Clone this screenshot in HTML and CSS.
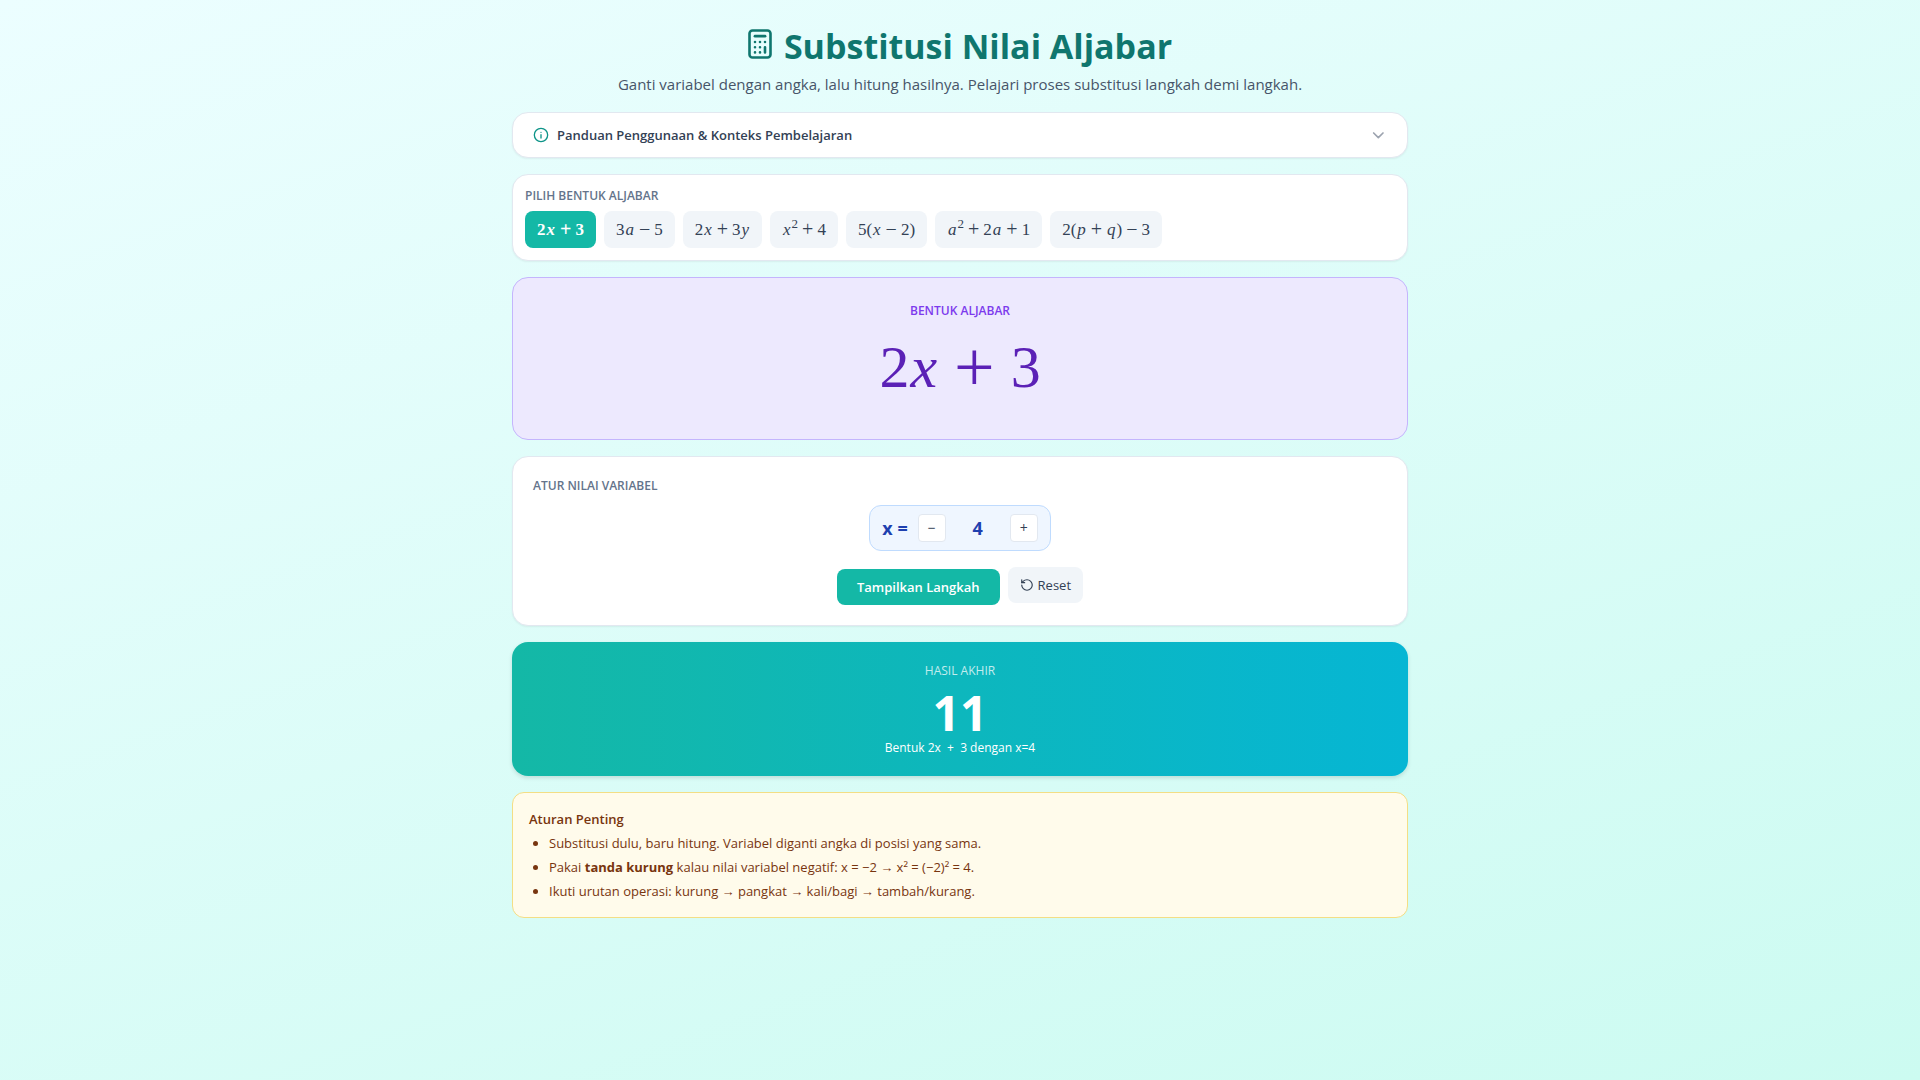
FILE: index.html
```html
<!DOCTYPE html>
<html lang="id">
<head>
    <meta charset="UTF-8">
    <meta name="viewport" content="width=device-width, initial-scale=1.0">
    <title>Substitusi Nilai Aljabar</title>
    <link rel="stylesheet" href="styles.css">
</head>
<body>
    <main class="container">
        <header class="header">
            <h1>
                <svg class="title-icon" viewBox="0 0 24 30" fill="none" stroke="currentColor" stroke-linecap="round">
                    <rect x="1.5" y="1.5" width="21" height="27" rx="3" stroke-width="2.6"/>
                    <path d="M7 7.2h10" stroke-width="2.8"/>
                    <path d="M7 13h.01M12 13h.01M17 13h.01M7 18.2h.01M12 18.2h.01M7 23.4h.01M12 23.4h.01M17 18.2v5.2" stroke-width="2.6"/>
                </svg>
                Substitusi Nilai Aljabar
            </h1>
            <p>Ganti variabel dengan angka, lalu hitung hasilnya. Pelajari proses substitusi langkah demi langkah.</p>
        </header>

        <button class="card guide" type="button" aria-expanded="false">
            <svg class="info-icon" viewBox="0 0 24 24" fill="none" stroke="currentColor" stroke-width="2" stroke-linecap="round">
                <circle cx="12" cy="12" r="10"/>
                <path d="M12 16.5V11.5M12 8h.01"/>
            </svg>
            <span>Panduan Penggunaan &amp; Konteks Pembelajaran</span>
            <svg class="chevron" viewBox="0 0 24 24" fill="none" stroke="currentColor" stroke-width="2.5" stroke-linecap="round" stroke-linejoin="round">
                <path d="m4 9 7 7 7-7"/>
            </svg>
        </button>

        <section class="card picker">
            <h2 class="label">PILIH BENTUK ALJABAR</h2>
            <div class="chips">
                <button class="chip math active" type="button">2<i>x</i><span class="op">+</span>3</button>
                <button class="chip math" type="button">3<i>a</i><span class="op">−</span>5</button>
                <button class="chip math" type="button">2<i>x</i><span class="op">+</span>3<i>y</i></button>
                <button class="chip math" type="button"><i>x</i><sup>2</sup><span class="op">+</span>4</button>
                <button class="chip math" type="button">5(<i>x</i><span class="op">−</span>2)</button>
                <button class="chip math" type="button"><i>a</i><sup>2</sup><span class="op">+</span>2<i>a</i><span class="op">+</span>1</button>
                <button class="chip math" type="button">2(<i>p</i><span class="op">+</span><i>q</i>)<span class="op">−</span>3</button>
            </div>
        </section>

        <section class="expression">
            <h2 class="label">BENTUK ALJABAR</h2>
            <div class="expression-value math">2<i>x</i><span class="op">+</span>3</div>
        </section>

        <section class="card variables">
            <h2 class="label">ATUR NILAI VARIABEL</h2>
            <div class="stepper">
                <label for="valueX">x =</label>
                <button class="step" type="button" onclick="changeValue(-1)">−</button>
                <input id="valueX" type="text" inputmode="numeric" value="4">
                <button class="step" type="button" onclick="changeValue(1)">+</button>
            </div>
            <div class="actions">
                <button class="primary" type="button">Tampilkan Langkah</button>
                <button class="reset" type="button" onclick="resetValue()">
                    <svg viewBox="0 0 24 24" fill="none" stroke="currentColor" stroke-width="2" stroke-linecap="round" stroke-linejoin="round">
                        <path d="M3 12a9 9 0 1 0 9-9 9.75 9.75 0 0 0-6.74 2.74L3 8"/>
                        <path d="M3 3v5h5"/>
                    </svg>
                    Reset
                </button>
            </div>
        </section>

        <section class="result">
            <h2 class="label">HASIL AKHIR</h2>
            <div class="result-value" id="resultValue">11</div>
            <p>Bentuk 2x&nbsp; + &nbsp;3 dengan x=<span id="resultX">4</span></p>
        </section>

        <section class="rules">
            <h2>Aturan Penting</h2>
            <ul>
                <li>Substitusi dulu, baru hitung. Variabel diganti angka di posisi yang sama.</li>
                <li>Pakai <strong>tanda kurung</strong> kalau nilai variabel negatif: x = −2 → x² = (−2)² = 4.</li>
                <li>Ikuti urutan operasi: kurung → pangkat → kali/bagi → tambah/kurang.</li>
            </ul>
        </section>
    </main>

    <script>
        const input = document.getElementById('valueX');

        function updateResult() {
            const x = Number(input.value) || 0;
            document.getElementById('resultValue').textContent = 2 * x + 3;
            document.getElementById('resultX').textContent = x;
        }

        function changeValue(step) {
            input.value = (Number(input.value) || 0) + step;
            updateResult();
        }

        function resetValue() {
            input.value = 4;
            updateResult();
        }

        input.addEventListener('input', updateResult);
    </script>
</body>
</html>
```

FILE: styles.css
```css
* {
    margin: 0;
    padding: 0;
    box-sizing: border-box;
}

body {
    font-family: 'Segoe UI', 'Open Sans', 'Noto Sans', sans-serif;
    font-size: 14px;
    line-height: 20px;
    color: #334155;
    background: linear-gradient(160deg, #ecfeff 0%, #ccfbf1 100%);
    min-height: 100vh;
    padding: 24px 16px;
}

button,
input {
    font: inherit;
    color: inherit;
    border: none;
}

button {
    cursor: pointer;
}

.container {
    max-width: 896px;
    margin: 0 auto;
    display: flex;
    flex-direction: column;
    gap: 16px;
}

.header {
    text-align: center;
}

.header h1 {
    display: flex;
    justify-content: center;
    align-items: center;
    gap: 12px;
    font-size: 34px;
    line-height: 44px;
    font-weight: 700;
    color: #0f766e;
}

.title-icon {
    width: 24px;
    height: 30px;
    margin-bottom: 4px;
}

.header p {
    padding-top: 4px;
    font-size: 15px;
    line-height: 24px;
    color: #475569;
}

.card {
    background: white;
    border: 1px solid #e2e8f0;
    border-radius: 16px;
    box-shadow: 0 1px 2px rgba(0, 0, 0, 0.06);
}

.guide {
    display: flex;
    align-items: center;
    gap: 8px;
    padding: 12px 20px;
    font-size: 13px;
    font-weight: 600;
    text-align: left;
}

.guide span {
    flex: 1;
}

.info-icon {
    width: 16px;
    height: 16px;
    color: #0d9488;
}

.chevron {
    width: 16px;
    height: 16px;
    color: #9ca3af;
}

.label {
    font-size: 12px;
    line-height: 18px;
    font-weight: 600;
    color: #64748b;
}

.picker {
    padding: 12px;
}

.chips {
    display: flex;
    flex-wrap: wrap;
    gap: 8px;
    margin-top: 6px;
}

.math {
    font-family: 'Liberation Serif', serif;
}

.math i {
    margin: 0 1px;
}

.math .op {
    display: inline-block;
    margin: 0 4px;
    font-size: 20px;
    line-height: 16px;
    vertical-align: -1px;
}

.math sup {
    font-size: 13px;
    line-height: 0;
}

.chip {
    padding: 8px 12px;
    border-radius: 8px;
    background: #f1f5f9;
    font-size: 17px;
    line-height: 21px;
}

.chip.active {
    background: #14b8a6;
    color: white;
    font-weight: 700;
}

.expression {
    padding: 24px;
    text-align: center;
    background: #ede9fe;
    border: 1px solid #c4b5fd;
    border-radius: 16px;
}

.expression .label {
    color: #7c3aed;
}

.expression-value {
    padding: 17px 0 18px;
    font-size: 60px;
    line-height: 60px;
    color: #5b21b6;
}

.expression-value .op {
    margin: 0 16px;
    font-size: 72px;
    line-height: 48px;
    vertical-align: -4px;
}

.variables {
    padding: 20px;
}

.stepper {
    display: flex;
    align-items: center;
    width: fit-content;
    margin: 10px auto 16px;
    padding: 8px 12px;
    background: #eff6ff;
    border: 1px solid #bfdbfe;
    border-radius: 12px;
}

.stepper label {
    margin-right: 10px;
    font-size: 18px;
    line-height: 28px;
    font-weight: 700;
    color: #1e40af;
}

.step {
    width: 28px;
    height: 28px;
    background: white;
    border: 1px solid #e2e8f0;
    border-radius: 4px;
}

.stepper input {
    width: 64px;
    background: none;
    text-align: center;
    font-size: 18px;
    line-height: 28px;
    font-weight: 700;
    color: #1e40af;
}

.actions {
    display: flex;
    justify-content: center;
    align-items: flex-start;
    gap: 8px;
}

.primary {
    margin-top: 2px;
    padding: 8px 20px;
    border-radius: 8px;
    background: #14b8a6;
    color: white;
    font-size: 13px;
    font-weight: 600;
}

.reset {
    display: flex;
    align-items: center;
    gap: 4px;
    padding: 8px 12px;
    border-radius: 8px;
    background: #f1f5f9;
    font-size: 13px;
}

.reset svg {
    width: 14px;
    height: 14px;
}

.result {
    padding: 20px;
    text-align: center;
    color: white;
    background: linear-gradient(90deg, #14b8a6 0%, #06b6d4 100%);
    border-radius: 16px;
    box-shadow: 0 2px 4px rgba(0, 0, 0, 0.12);
}

.result .label {
    font-weight: 500;
    color: rgba(255, 255, 255, 0.75);
}

.result-value {
    margin-top: 6px;
    font-size: 48px;
    line-height: 54px;
    font-weight: 700;
}

.result p {
    font-size: 12px;
    line-height: 16px;
}

.rules {
    padding: 16px 16px 14px;
    background: #fffbeb;
    border: 1px solid #f3de85;
    border-radius: 12px;
    font-size: 13px;
    line-height: 24px;
    color: #78350f;
}

.rules h2 {
    margin-bottom: 2px;
    font-size: 13px;
    line-height: 20px;
    font-weight: 600;
}

.rules ul {
    padding-left: 20px;
}
```
